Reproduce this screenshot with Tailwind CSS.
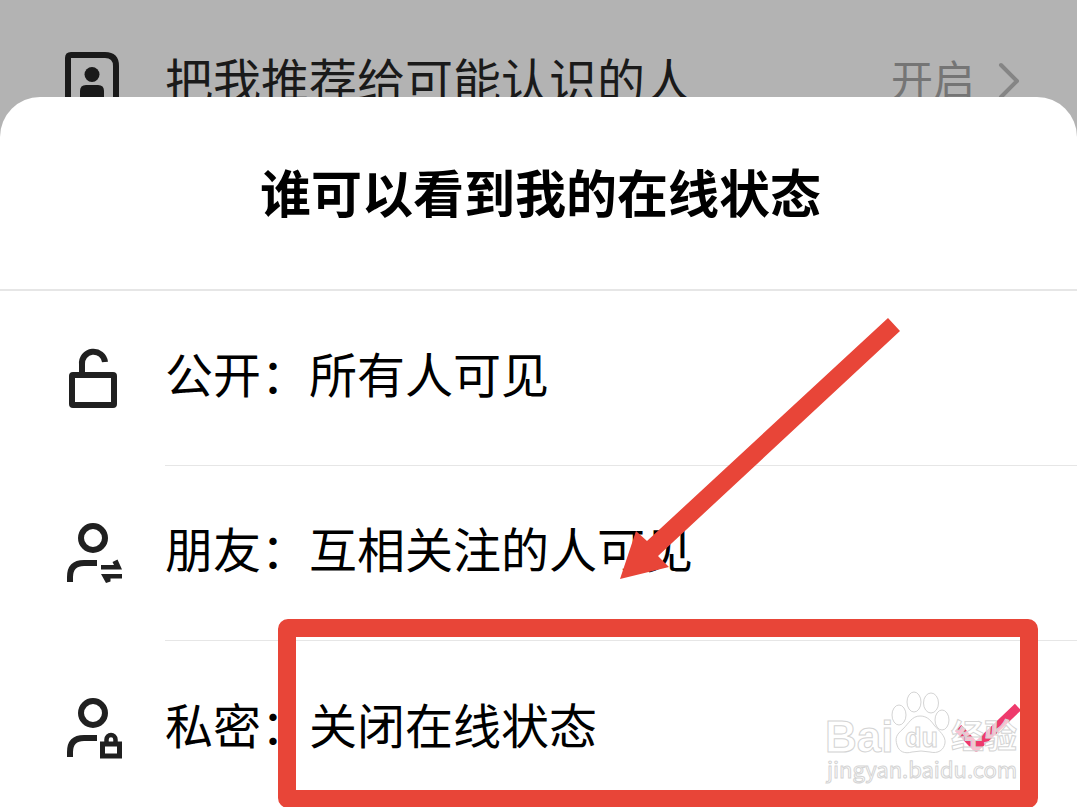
<!DOCTYPE html>
<html lang="zh-CN">
<head>
  <meta charset="UTF-8">
  <meta name="viewport" content="width=device-width, initial-scale=1.0">
  <title>谁可以看到我的在线状态</title>
  <script src="https://cdn.jsdelivr.net/npm/@tailwindcss/browser@4"></script>
</head>
<body class="relative h-screen overflow-hidden bg-[#b3b3b3] font-['Noto_Sans_CJK_SC',sans-serif] text-black">

  <!-- Settings row behind the sheet -->
  <button type="button" class="flex h-40 w-full items-center pl-[64px] pr-[56px] text-left text-[#1a1a1a]">
    <svg class="mr-[43px] h-[60px] w-[58px] shrink-0" viewBox="0 0 58 60" fill="none">
      <path d="M7 5H41Q52 5 52 16V55H4V8Q4 5 7 5Z" stroke="currentColor" stroke-width="6"/>
      <circle cx="28" cy="24.500" r="7.500" fill="currentColor"/>
      <path d="M16 50V41Q16 35 22 35H34Q40 35 40 41V50Z" fill="currentColor"/>
    </svg>
    <span class="flex-1 pb-1 text-[48px] leading-[72px]">把我推荐给可能认识的人</span>
    <span class="pb-1 text-[42px] leading-[64px] text-[#757575]">开启</span>
    <svg class="ml-5 h-[40px] w-[26px] shrink-0" viewBox="0 0 26 40" fill="none" stroke="#858585" stroke-width="4" stroke-linecap="round" stroke-linejoin="round">
      <path d="M6 5L22 21L6 37"/>
    </svg>
  </button>

  <!-- Bottom sheet -->
  <main class="relative -mt-[63px] rounded-t-[40px] bg-white">
    <h1 class="flex h-[194px] items-center justify-center border-b-2 border-[#e6e6e6] pb-1 pl-1 text-[51px] font-bold leading-[76px]">谁可以看到我的在线状态</h1>

    <form>
      <label class="flex h-[175px] cursor-pointer items-center pl-[64px]">
        <input type="radio" name="visibility" value="public" class="peer sr-only">
        <svg class="mb-0.5 mr-[41px] h-[62px] w-[60px] shrink-0" viewBox="0 0 60 62" fill="none" stroke="#202020" stroke-width="6">
          <path d="M18 26V17.500a11.500 11.500 0 0 1 23 -2.500"/>
          <rect x="8" y="28" width="42" height="30" rx="1"/>
        </svg>
        <span class="flex h-full flex-1 items-center border-b border-[#e6e6e6] pb-3 text-[48px] leading-[72px]">公开：所有人可见</span>
      </label>

      <label class="flex h-[175px] cursor-pointer items-center pl-[64px]">
        <input type="radio" name="visibility" value="friends" class="peer sr-only">
        <svg class="mb-0.5 mr-[41px] h-[62px] w-[60px] shrink-0" viewBox="0 0 60 62" fill="none" stroke="#202020" stroke-width="6">
          <circle cx="29" cy="16" r="12"/>
          <path d="M6 60V55Q6 41 20 41H33"/>
          <path d="M37 47.500V43H50L48.500 40L53.500 37.500L58 47.500Z" fill="#202020" stroke="none"/>
          <path d="M58 52V56.500H46.500L46.500 59.500L42 61L37 52Z" fill="#202020" stroke="none"/>
        </svg>
        <span class="flex h-full flex-1 items-center border-b border-[#e6e6e6] pb-3 text-[48px] leading-[72px]">朋友：互相关注的人可见</span>
      </label>

      <label class="flex h-[175px] cursor-pointer items-center pl-[64px]">
        <input type="radio" name="visibility" value="private" class="peer sr-only" checked>
        <svg class="mb-0.5 mr-[41px] h-[62px] w-[60px] shrink-0" viewBox="0 0 60 62" fill="none" stroke="#202020" stroke-width="6">
          <circle cx="29" cy="16" r="12"/>
          <path d="M6 60V55Q6 41 20 41H33"/>
          <path d="M42.500 46V42.500a4.500 4.500 0 0 1 9 0V46" stroke-width="4.500"/>
          <rect x="38.500" y="47" width="17" height="12" stroke-width="5"/>
        </svg>
        <span class="flex h-full flex-1 items-center pb-3 text-[48px] leading-[72px]">私密：关闭在线状态</span>
        <svg class="mr-[55px] hidden h-[52px] w-[70px] shrink-0 peer-checked:block" viewBox="0 0 70 52" fill="none" stroke="#ee3a6c" stroke-width="9" stroke-linejoin="round">
          <path d="M6 25L24 44L66 4"/>
        </svg>
      </label>
    </form>
  </main>

  <!-- Watermark -->
  <svg class="pointer-events-none absolute left-[820px] top-[685px] h-[104px] w-[204px]" viewBox="0 0 204 104" fill="#ffffff" fill-opacity="0.700" stroke="#d4d4d4" stroke-width="1" font-family="'Liberation Sans', 'Noto Sans CJK SC', sans-serif">
    <text x="5" y="67" font-size="44" font-weight="bold">Bai</text>
    <ellipse cx="79" cy="30" rx="7" ry="10"/>
    <ellipse cx="94" cy="17" rx="7" ry="10"/>
    <ellipse cx="111" cy="18" rx="7.500" ry="10"/>
    <ellipse cx="122" cy="35" rx="7" ry="10"/>
    <path d="M100 31C92 31 89 38 83 44C76 50 75 53 77 60C79 67 85 69 92 67Q101 65 110 67C118 69 124 65 125 58C126 51 119 46 114 40C110 34 106 31 100 31Z"/>
    <text x="85" y="62" font-size="27" font-weight="bold">du</text>
    <text x="131" y="63" font-size="33" font-weight="bold" font-family="'Noto Sans CJK SC', sans-serif">经验</text>
    <text x="7" y="93" font-size="22" font-family="'Noto Sans CJK SC', sans-serif">jingyan.baidu.com</text>
  </svg>

  <!-- Highlight box and arrow -->
  <div class="pointer-events-none absolute left-[278px] top-[619px] h-[189px] w-[760px] rounded-[10px] border-[18px] border-[#e84538]"></div>
  <svg class="pointer-events-none absolute left-[610px] top-[310px] h-[280px] w-[300px]" viewBox="0 0 300 280" fill="#e84538">
    <path d="M278 8L290 21L48 246L59 257L10 269L26 221L37 231Z"/>
  </svg>

</body>
</html>
